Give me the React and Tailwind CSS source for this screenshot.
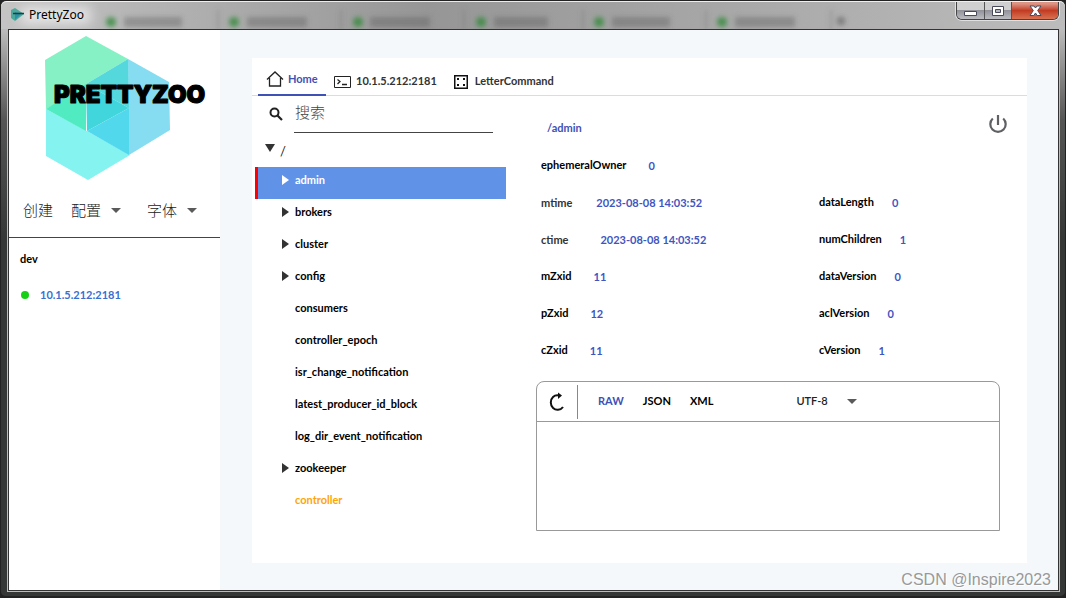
import { useState } from "react";

const nodes = [
  { name: "admin", expandable: true },
  { name: "brokers", expandable: true },
  { name: "cluster", expandable: true },
  { name: "config", expandable: true },
  { name: "consumers" },
  { name: "controller_epoch" },
  { name: "isr_change_notification" },
  { name: "latest_producer_id_block" },
  { name: "log_dir_event_notification" },
  { name: "zookeeper", expandable: true },
  { name: "controller", ephemeral: true },
];

const leftStats = [
  { label: "ephemeralOwner", value: "0", gap: "gap-[22px]" },
  { label: "mtime", value: "2023-08-08 14:03:52", gap: "gap-6", soft: true },
  { label: "ctime", value: "2023-08-08 14:03:52", gap: "gap-8", soft: true },
  { label: "mZxid", value: "11", gap: "gap-[22px]" },
  { label: "pZxid", value: "12", gap: "gap-[22px]" },
  { label: "cZxid", value: "11", gap: "gap-[22px]" },
];

const rightStats = [
  { label: "dataLength", value: "0", gap: "gap-[18px]" },
  { label: "numChildren", value: "1", gap: "gap-[18px]" },
  { label: "dataVersion", value: "0", gap: "gap-[18px]" },
  { label: "aclVersion", value: "0", gap: "gap-[18px]" },
  { label: "cVersion", value: "1", gap: "gap-[18px]" },
];

const backdropTabs = [
  [111, 123, 58],
  [234, 246, 60],
  [358, 369, 60],
  [481, 493, 54],
  [599, 611, 58],
  [722, 734, 60],
];

function Caret() {
  return (
    <svg width="10" height="5" viewBox="0 0 10 5" aria-hidden="true">
      <path d="M0 0h10L5 5z" fill="#5a5a5a" />
    </svg>
  );
}

function TitleBar() {
  return (
    <header className="relative flex h-7 shrink-0 items-start justify-between overflow-hidden rounded-t-md border-t border-white/80 bg-linear-to-r from-[#c4c4c4] via-[#969696] via-40% to-[#bcbcbc]">
      <svg className="absolute inset-0 h-full w-full" aria-hidden="true">
        <defs>
          <filter id="soft" x="-20%" y="-100%" width="140%" height="300%">
            <feGaussianBlur stdDeviation="2.500" />
          </filter>
          <filter id="glow" x="-30%" y="-100%" width="160%" height="300%">
            <feGaussianBlur stdDeviation="6" />
          </filter>
        </defs>
        <g filter="url(#soft)">
          {backdropTabs.map(([dot, bar, width]) => (
            <g key={dot}>
              <rect x={bar} y="15" width={width} height="10" fill="#555" opacity="0.38" />
              <circle cx={dot - 1} cy="20" r="5" fill="#2f8a37" opacity="0.8" />
            </g>
          ))}
          <circle cx="840" cy="19" r="4" fill="#444" opacity="0.5" />
          <path d="M217 8v20M340 8v20M463 8v20M582 8v20M705 8v20M830 8v20" stroke="#666" strokeWidth="2" opacity="0.4" />
        </g>
        <rect x="20" y="5" width="70" height="17" fill="#fff" opacity="0.6" filter="url(#glow)" />
      </svg>
      <h1 className="relative flex items-center gap-1 pt-[5px] pl-[10px] font-['Noto_Sans',sans-serif] text-xs leading-4 text-black">
        <svg width="14" height="14" viewBox="0 0 14 14" aria-hidden="true">
          <path d="M0 2l4-2 9 6-9 7-4-3z" fill="#4aa99c" />
          <path d="M4 4l6 2-6 6z" fill="#2593a8" />
          <path d="M2 5.500h11" stroke="#263b3d" strokeWidth="1.500" />
        </svg>
        PrettyZoo
      </h1>
      <div className="relative mr-[6px] flex h-[18px] overflow-hidden rounded-b-md border border-t-0 border-[#444] shadow-[0_0_0_1px_#ffffff90]">
        <button aria-label="Minimize" className="flex w-7 items-center justify-center border-r border-[#555] bg-linear-to-b from-[#d0d0d0] from-45% via-[#92939a] via-50% to-[#bcbcc2]">
          <svg width="13" height="12" viewBox="0 0 13 12">
            <path d="M.5 6.500h12v4H.5z" fill="#fff" stroke="#484a5c" />
          </svg>
        </button>
        <button aria-label="Maximize" className="flex w-[27px] items-center justify-center border-r border-[#555] bg-linear-to-b from-[#d0d0d0] from-45% via-[#92939a] via-50% to-[#bcbcc2]">
          <svg width="12" height="10" viewBox="0 0 12 10">
            <path d="M.5.5h11v9H.5z" fill="#fff" stroke="#484a5c" />
            <path d="M3.500 3.500h5v3h-5z" fill="#b5b7bf" stroke="#484a5c" />
          </svg>
        </button>
        <button aria-label="Close" className="flex w-[46px] items-center justify-center bg-linear-to-b from-[#dc9484] from-10% via-[#c23b22] via-50% to-[#d97150]">
          <svg width="13" height="12" viewBox="0 0 13 12">
            <path d="M1 1h4l1.500 2L8 1h4L8.700 5.500 12 10.500H8.200L6.500 8 4.800 10.500H1l3.300-5z" fill="#fff" stroke="#484a5c" />
          </svg>
        </button>
      </div>
    </header>
  );
}

function Logo() {
  return (
    <svg className="block" width="211" height="154" viewBox="9 30 211 154" role="img" aria-label="PrettyZoo logo">
      <path d="M86 36l42 23-42 25v4l-40 21-1-49z" fill="#86f1c5" />
      <path d="M128 59l41 23 1 48-41 25z" fill="#86dcf1" />
      <path d="M46 109l41 22 43 24-42 25-42-24z" fill="#85f3f0" />
      <path d="M128 59l1 49-43-24z" fill="#54d8dc" />
      <path d="M86 84v47l-40-22z" fill="#50ebc1" />
      <path d="M86 84l43 24-42 23z" fill="#41d6dc" />
      <path d="M129 108v47l-42-24z" fill="#51d8ec" />
      <text
        x="54"
        y="103"
        strokeWidth="1.200"
        strokeLinejoin="round"
        className="fill-black stroke-black font-['Inter',sans-serif] text-[24px] font-black"
      >
        PRETTYZOO
      </text>
    </svg>
  );
}

function Sidebar() {
  return (
    <aside className="w-[211px] shrink-0 bg-white">
      <Logo />
      <nav className="flex h-[54px] items-center border-b border-[#444] pl-[14px] font-['Noto_Sans_CJK_SC',sans-serif] text-[15px] font-light text-[#222]">
        <button className="mr-[18px]">创建</button>
        <button className="mr-[26px] flex items-center gap-[10px]">
          配置 <Caret />
        </button>
        <button className="flex items-center gap-[10px]">
          字体 <Caret />
        </button>
      </nav>
      <h2 className="pt-[13px] pl-[11px] text-[11px] leading-4 font-bold text-black">dev</h2>
      <button className="mt-5 flex items-center gap-[11px] pl-3 text-[11px] leading-4 font-bold text-[#3a6fd0]">
        <span className="size-2 rounded-full bg-[#16d016]" />
        10.1.5.212:2181
      </button>
    </aside>
  );
}

function TabBar() {
  return (
    <nav className="flex h-[38px] shrink-0 items-stretch border-b border-[#dcdcdc] pl-[6px] text-[11px] font-bold text-[#333]">
      <button className="-mb-px flex w-[68px] items-center gap-1 border-b-2 border-[#3f51b5] pt-1.5 pl-2 text-[#3f51b5]">
        <svg width="18" height="16" viewBox="0 0 18 16" fill="none" stroke="#222" strokeWidth="1.300">
          <path d="M1 8.500L9 1l8 7.500M3.500 7v8h11V7" />
        </svg>
        Home
      </button>
      <button className="flex items-center gap-[5px] pt-2.5 pl-2">
        <svg width="17" height="12" viewBox="0 0 17 12" fill="none" stroke="#222">
          <path d="M.5.5h16v11H.5z" />
          <path d="M3.500 3.500L6 5.500 3.500 8M8 8.500h5" strokeWidth="1.300" />
        </svg>
        10.1.5.212:2181
      </button>
      <button className="flex items-center gap-[7px] pt-2.5 pl-[17px]">
        <svg width="14" height="14" viewBox="0 0 14 14">
          <path d="M.75.75h12.500v12.500H.75z" fill="none" stroke="#111" strokeWidth="1.500" />
          <path d="M3 3h2v2H3zM9 3h2v2H9zM3 9h2v2H3zM9 9h2v2H9z" fill="#111" />
        </svg>
        LetterCommand
      </button>
    </nav>
  );
}

function Tree() {
  const [selected, setSelected] = useState("admin");
  return (
    <section className="w-[254px] shrink-0 pl-[3px]">
      <div className="flex h-[37px] items-start pt-1 pl-[14px]">
        <svg className="mt-[7px] mr-[11px]" width="14" height="14" viewBox="0 0 14 14" fill="none" stroke="#222" aria-hidden="true">
          <circle cx="5.500" cy="5.500" r="4" strokeWidth="2" />
          <path d="M8.500 8.500l4.500 4.500" strokeWidth="2.200" />
        </svg>
        <input
          aria-label="搜索"
          placeholder="搜索"
          className="mr-[13px] h-[33px] min-w-0 flex-1 border-b border-[#444] pb-2.5 pl-px font-['Noto_Sans_CJK_SC',sans-serif] text-[15px] font-light outline-none placeholder:text-[#444]"
        />
      </div>
      <button className="flex h-[34px] items-center gap-[5px] pt-1 pl-[10px] text-[13px] text-[#222]">
        <svg className="-mt-2" width="10" height="8" viewBox="0 0 10 8" aria-hidden="true">
          <path d="M0 0h10L5 8z" fill="#333" />
        </svg>
        /
      </button>
      <ul className="text-[11px] font-bold">
        {nodes.map((node) => {
          const active = node.name === selected;
          const tone = active
            ? "border-[#ff0000] bg-[#6093e8] text-white"
            : node.ephemeral
              ? "border-transparent text-[#ffa500]"
              : "border-transparent text-black";
          return (
            <li key={node.name}>
              <button
                onClick={() => setSelected(node.name)}
                className={`flex h-8 w-full items-center border-l-3 pb-1.5 pl-6 text-left ${tone}`}
              >
                <span className="w-[13px]">
                  {node.expandable && (
                    <svg width="7" height="10" viewBox="0 0 7 10" aria-hidden="true">
                      <path d="M0 0l7 5-7 5z" fill={active ? "#fff" : "#333"} />
                    </svg>
                  )}
                </span>
                {node.name}
              </button>
            </li>
          );
        })}
      </ul>
    </section>
  );
}

function Stats({ items }) {
  return (
    <dl>
      {items.map((item) => (
        <div key={item.label} className={`flex h-[37px] items-center ${item.gap}`}>
          <dt className={item.soft ? "pt-0.5 text-[#333]" : "text-black"}>{item.label}</dt>
          <dd className="pt-0.5 text-[#3f55c0]">{item.value}</dd>
        </div>
      ))}
    </dl>
  );
}

function Editor() {
  const [format, setFormat] = useState("RAW");
  return (
    <div className="flex min-h-0 flex-1 flex-col rounded-t-lg border border-[#999]">
      <div className="flex h-10 shrink-0 items-center border-b border-[#999] text-[11px] font-bold text-black">
        <button aria-label="Refresh" className="flex h-[34px] w-[41px] items-center justify-center border-r border-[#888]">
          <svg width="16" height="20" viewBox="0 0 16 20" fill="none" stroke="#111">
            <path d="M10 3.500C5 2.500 1.800 6 1.800 10.500S5.500 18.200 9 17.800c2.200-.2 4-1.300 5-2.800" strokeWidth="2" />
            <path d="M9 .5l4 3-4 3.500z" fill="#111" stroke="none" />
          </svg>
        </button>
        <div className="flex gap-[19px] pl-5">
          {["RAW", "JSON", "XML"].map((name) => (
            <button key={name} onClick={() => setFormat(name)} className={name === format ? "text-[#3f51b5]" : ""}>
              {name}
            </button>
          ))}
        </div>
        <label className="relative ml-[83px] flex items-center">
          <select aria-label="Encoding" className="w-[61px] appearance-none bg-transparent font-semibold text-[#222] outline-none">
            <option>UTF-8</option>
            <option>GBK</option>
          </select>
          <span className="pointer-events-none absolute right-0">
            <Caret />
          </span>
        </label>
      </div>
      <textarea aria-label="Node data" className="min-h-0 flex-1 resize-none bg-white p-2 text-[11px] outline-none" />
    </div>
  );
}

function Details() {
  return (
    <section className="flex min-w-0 flex-1 flex-col pr-[27px] pb-8 pl-[30px] text-[11px] font-bold">
      <div className="flex h-[51px] shrink-0 items-center justify-between pt-3.5 pl-[11px]">
        <span className="text-[#3f51b5]">/admin</span>
        <button aria-label="Disconnect" className="-mt-2.5 -mr-2">
          <svg width="20" height="20" viewBox="0 0 20 20" fill="none" stroke="#5f6064" strokeWidth="2.200">
            <path d="M10 1v10M4.800 4.500A7.700 7.700 0 1 0 15.200 4.500" />
          </svg>
        </button>
      </div>
      <div className="grid shrink-0 grid-cols-[278px_1fr] pb-3 pl-[5px]">
        <Stats items={leftStats} />
        <div className="pt-[37px]">
          <Stats items={rightStats} />
        </div>
      </div>
      <Editor />
    </section>
  );
}

export default function App() {
  return (
    <div className="flex h-screen flex-col bg-[#222] font-['Lato',sans-serif]">
      <div className="flex min-h-0 flex-1 flex-col rounded-md border-x border-t border-b-2 border-[#222] bg-linear-to-b from-[#bbb] from-5% via-[#555] via-20% to-[#353737] to-40%">
        <TitleBar />
        <div className="mr-[6px] mb-[5px] ml-[7px] flex min-h-0 flex-1 border border-[#333] bg-[#f4f8fb] ring-1 ring-[#bbb]">
          <Sidebar />
          <main className="relative flex min-w-0 flex-1 pt-7 pr-[31px] pb-[27px] pl-8">
            <div className="flex min-w-0 flex-1 flex-col bg-white">
              <TabBar />
              <div className="flex min-h-0 flex-1">
                <Tree />
                <Details />
              </div>
            </div>
            <span className="absolute right-[7px] bottom-0 font-['Liberation_Sans',sans-serif] text-base leading-5 text-[#999] [text-shadow:1px_1px_0_#fff]">
              CSDN @Inspire2023
            </span>
          </main>
        </div>
      </div>
    </div>
  );
}
